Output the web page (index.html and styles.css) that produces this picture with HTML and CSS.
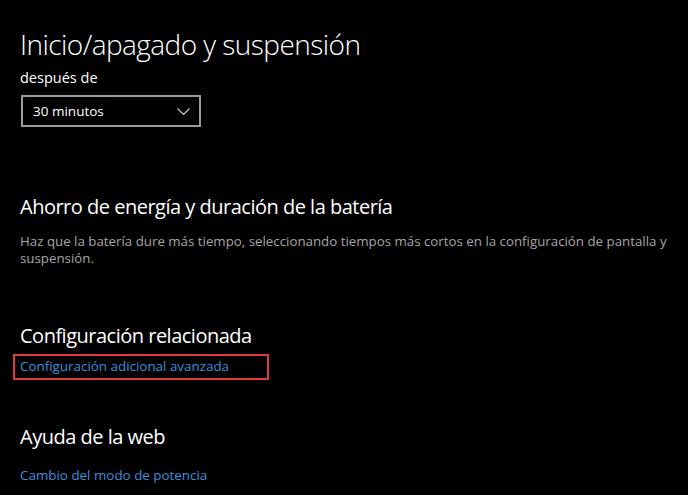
FILE: index.html
```html
<!DOCTYPE html>
<html lang="es">
<head>
<meta charset="utf-8">
<title>Inicio/apagado y suspensión</title>
<link rel="stylesheet" href="styles.css">
</head>
<body>
<main class="page">
  <h1 class="title">Inicio/apagado y suspensión</h1>
  <div class="label">después de</div>
  <div class="select">
    <span class="select-value">30 minutos</span>
    <svg class="chevron" width="13" height="7" viewBox="0 0 13 7"><polyline points="0.5,0.5 6.5,6.5 12.5,0.5" fill="none" stroke="#cfcfcf" stroke-width="1.1"/></svg>
  </div>

  <h2 class="heading h-battery">Ahorro de energía y duración de la batería</h2>
  <p class="desc">Haz que la batería dure más tiempo, seleccionando tiempos más cortos en la configuración de pantalla y suspensión.</p>

  <h2 class="heading h-related">Configuración relacionada</h2>
  <div class="link-row link-related">
    <a class="link" href="#">Configuración adicional avanzada</a>
    <span class="highlight"></span>
  </div>

  <h2 class="heading h-web">Ayuda de la web</h2>
  <div class="link-row link-web">
    <a class="link" href="#">Cambio del modo de potencia</a>
  </div>
</main>
</body>
</html>
```

FILE: styles.css
```css
html, body {
  margin: 0;
  padding: 0;
  background: #000;
}
body {
  font-family: "Open Sans", "Noto Sans", sans-serif;
  color: #fff;
  width: 688px;
  height: 495px;
  overflow: hidden;
}
.page {
  padding: 26px 0 0 20px;
  width: 655px;
}
.title {
  margin: 0;
  font-size: 28px;
  font-weight: 300;
  line-height: 36px;
  letter-spacing: -0.55px;
}
.label {
  margin-top: 6px;
  font-size: 14.5px;
  line-height: 20px;
  color: #fff;
}
.select {
  margin-top: 7px;
  margin-left: 1px;
  width: 180px;
  height: 32px;
  box-sizing: border-box;
  border: 2px solid #9b9b9b;
  display: flex;
  align-items: center;
  justify-content: space-between;
  padding: 0 9px 0 10px;
}
.select-value {
  font-size: 13.5px;
  line-height: 28px;
}
.chevron {
  display: block;
}
.heading {
  margin: 0;
  font-size: 20px;
  font-weight: 400;
  line-height: 28px;
  letter-spacing: -0.5px;
}
.h-battery { margin-top: 66px; }
.h-related { margin-top: 56px; }
.h-web { margin-top: 47px; }
.desc {
  margin: 12px 0 0;
  font-size: 13.3px;
  line-height: 16.5px;
  color: #a6a6a6;
}
.link-row {
  position: relative;
  line-height: 20px;
  font-size: 13.4px;
}
.link-related { margin-top: 6px; }
.link-web { margin-top: 14px; }
.link {
  color: #3d8fdc;
  text-decoration: none;
}
.highlight {
  position: absolute;
  left: -7px;
  top: -2px;
  width: 256px;
  height: 26px;
  box-sizing: border-box;
  border: 2px solid #e0393e;
}
```
